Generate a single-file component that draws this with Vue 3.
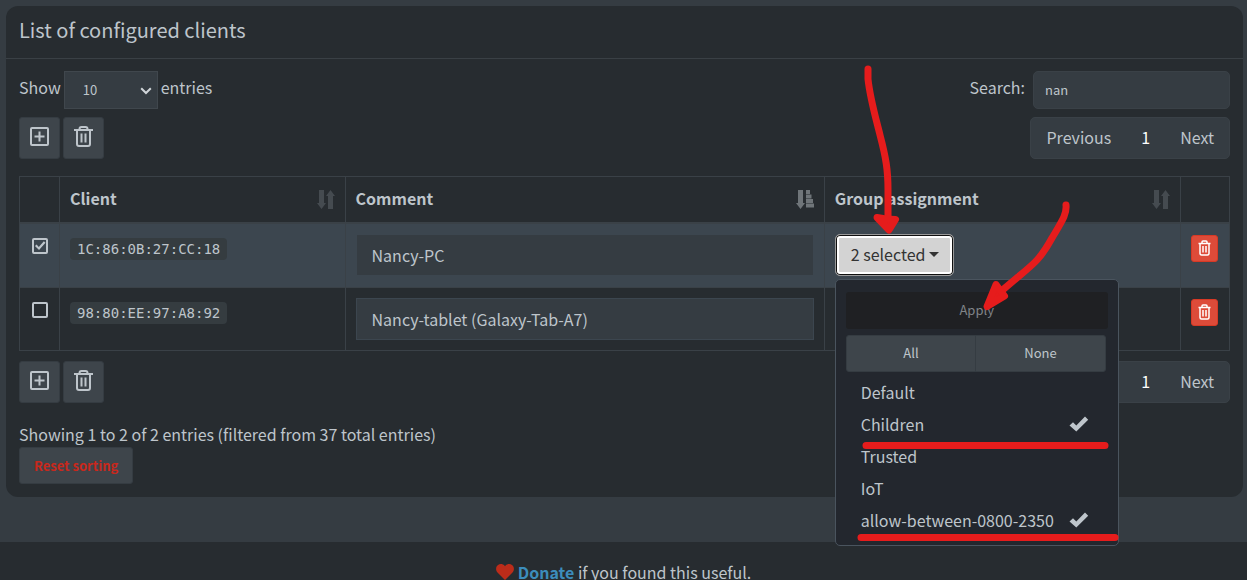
<script setup>
import { ref } from 'vue'

const pageLength = ref('10')
const search = ref('nan')

const columns = [
  { title: 'Client', sort: 'both' },
  { title: 'Comment', sort: 'asc' },
  { title: 'Group assignment', sort: 'both' },
]

const clients = ref([
  { mac: '1C:86:0B:27:CC:18', comment: 'Nancy-PC', selected: true, open: true },
  { mac: '98:80:EE:97:A8:92', comment: 'Nancy-tablet (Galaxy-Tab-A7)', selected: false, open: false },
])

const groups = ref([
  { name: 'Default', on: false },
  { name: 'Children', on: true },
  { name: 'Trusted', on: false },
  { name: 'IoT', on: false },
  { name: 'allow-between-0800-2350', on: true },
])
</script>

<template>
  <div class="page">
    <main class="content">
      <section class="card">
        <header class="card-header">
          <h3>List of configured clients</h3>
        </header>
        <div class="card-body">
          <div class="bar">
            <div class="field">
              <label for="length">Show</label>
              <span class="select-wrap">
                <select id="length" v-model="pageLength">
                  <option>10</option>
                  <option>25</option>
                  <option>50</option>
                </select>
                <svg class="chevron" viewBox="0 0 12 8" width="12" height="8"><path d="M1.2 1.2 6 6l4.800-4.800" /></svg>
              </span>
              <span>entries</span>
            </div>
            <div class="field search">
              <label for="search">Search:</label>
              <input id="search" v-model="search" type="text" />
            </div>
          </div>

          <div class="bar tools">
            <div class="buttons">
              <button type="button" class="tool" aria-label="Select all">
                <svg viewBox="0 0 19 22" width="19" height="22"><rect x="1" y="2" width="17" height="17" rx="1" /><path d="M9.500 5.500v10M4.500 10.500h10" /></svg>
              </button>
              <button type="button" class="tool" aria-label="Delete selected">
                <svg viewBox="0 0 19 22" width="19" height="22"><path d="M0 4h19M5.500 4V3q0-2 2-2h4q2 0 2 2v1M3 5v13q0 2 2 2h9q2 0 2-2V5M7.500 7.500v9M11.500 7.500v9" /></svg>
              </button>
            </div>
            <nav class="pager" aria-label="Pages">
              <a href="#prev">Previous</a><a href="#1" class="current">1</a><a href="#next">Next</a>
            </nav>
          </div>

          <table>
            <colgroup>
              <col class="c-check" /><col class="c-client" /><col class="c-comment" /><col /><col class="c-action" />
            </colgroup>
            <thead>
              <tr>
                <th></th>
                <th v-for="col in columns" :key="col.title">
                  <div class="head">
                    <span>{{ col.title }}</span>
                    <svg v-if="col.sort === 'both'" class="sort" viewBox="0 0 18 19" width="18" height="19">
                      <path d="M2 0h5v13h2l-4.500 6L0 13h2zM11 19h5V6h2l-4.500-6L9 6h2z" />
                    </svg>
                    <svg v-else class="sort active" viewBox="0 0 18 19" width="18" height="19">
                      <path d="M2 0h5v13h2l-4.500 6L0 13h2zM10 0h4v4h-4zM10 4.500h5.500v4H10zM10 9h7v4h-7zM10 13.500h8v4h-8z" />
                    </svg>
                  </div>
                </th>
                <th></th>
              </tr>
            </thead>
            <tbody>
              <tr v-for="(client, i) in clients" :key="client.mac" :class="{ selected: client.selected }">
                <td class="check-cell">
                  <input v-model="client.selected" type="checkbox" :aria-label="'Select ' + client.mac" />
                </td>
                <td><code>{{ client.mac }}</code></td>
                <td>
                  <input v-model="client.comment" class="comment" type="text" :aria-label="'Comment ' + (i + 1)" />
                </td>
                <td>
                  <div v-if="client.open" class="dropdown">
                    <button type="button" class="toggle">2 selected<span class="caret"></span></button>
                    <div class="menu">
                      <button type="button" class="apply" disabled>Apply</button>
                      <div class="all-none">
                        <button type="button">All</button>
                        <button type="button">None</button>
                      </div>
                      <ul>
                        <li v-for="g in groups" :key="g.name">
                          <a href="#group" @click.prevent="g.on = !g.on">
                            {{ g.name }}
                            <svg v-if="g.on" viewBox="0 0 20 16" width="20" height="16"><path d="M.5 9.500 4 6.200l3.300 3.200L16 .5l3.200 3.200L7.300 15.500z" /></svg>
                          </a>
                        </li>
                      </ul>
                    </div>
                  </div>
                </td>
                <td>
                  <button type="button" class="delete" :aria-label="'Delete ' + client.mac">
                    <svg viewBox="0 0 13 16" width="13" height="16"><path d="M.5 3.500h12M4 3V2q0-1 1-1h3q1 0 1 1v1M2 4v9.500q0 1.500 1.500 1.500h6q1.500 0 1.500-1.500V4M5 6v6.500M8 6v6.500" /></svg>
                  </button>
                </td>
              </tr>
            </tbody>
          </table>

          <div class="bar below">
            <div class="buttons">
              <button type="button" class="tool" aria-label="Select all">
                <svg viewBox="0 0 19 22" width="19" height="22"><rect x="1" y="2" width="17" height="17" rx="1" /><path d="M9.500 5.500v10M4.500 10.500h10" /></svg>
              </button>
              <button type="button" class="tool" aria-label="Delete selected">
                <svg viewBox="0 0 19 22" width="19" height="22"><path d="M0 4h19M5.500 4V3q0-2 2-2h4q2 0 2 2v1M3 5v13q0 2 2 2h9q2 0 2-2V5M7.500 7.500v9M11.500 7.500v9" /></svg>
              </button>
            </div>
            <nav class="pager" aria-label="Pages below">
              <a href="#prev">Previous</a><a href="#1" class="current">1</a><a href="#next">Next</a>
            </nav>
          </div>

          <p class="info">Showing 1 to 2 of 2 entries (filtered from 37 total entries)</p>
          <button type="button" class="reset">Reset sorting</button>
        </div>
      </section>
    </main>

    <footer>
      <svg viewBox="0 0 18 16" width="18" height="16"><path d="M9 16 1.500 8.500C-.5 6.300-.3 3 1.700 1.300 3.800-.5 6.700-.2 8.400 1.600L9 2.300l.6-.7c1.700-1.800 4.600-2.100 6.700-.3 2 1.700 2.200 5 .2 7.200z" /></svg>
      <span><a href="#donate">Donate</a> if you found this useful.</span>
    </footer>

    <svg class="marks" viewBox="0 0 1247 580" width="1247" height="580" aria-hidden="true">
      <path d="M868 69v10C870 98 875 115 880 135C886 158 888 170 888 190V226" />
      <path class="solid" d="M877 217.500 889 230 895.500 219.500 886 219z" />
      <path d="M1066 205C1067 214 1062 221 1052 238C1041 258 1035 263 1018 277L999 293" />
      <path class="solid" d="M996 284.500 1004.500 296 987 306.500z" />
      <path d="M866 445.500h239M861 537.500h254" />
    </svg>
  </div>
</template>

<style>
html {
  background: #353c42;
  scrollbar-width: none;
}
body {
  margin: 0;
}
</style>

<style scoped>
* {
  box-sizing: border-box;
}
.page {
  position: relative;
  min-height: 100vh;
  background: #353c42;
  color: #bec5cb;
  font-family: "Noto Sans CJK SC", "Noto Sans", sans-serif;
  font-size: 16px;
  line-height: 26px;
}
button,
input,
select {
  margin: 0;
  font-family: inherit;
  color: inherit;
}
a {
  color: inherit;
  text-decoration: none;
}
svg {
  display: block;
  fill: none;
}
.content {
  padding: 6px 4px 45px 6px;
}
.card {
  background: #272c30;
  border-radius: 12px;
}
.card-header {
  padding: 10px 13px 14px;
  border-bottom: 1px solid #3a4045;
}
h3 {
  margin: 0;
  font-size: 20px;
  font-weight: 400;
  line-height: 28px;
}
.card-body {
  padding: 12px 13px 13px;
}
.bar {
  display: flex;
  justify-content: space-between;
}
.tools {
  margin: 8px 0 17px;
}
.below {
  margin-top: 10px;
}
.field {
  display: flex;
  align-items: flex-start;
  gap: 3px;
}
.field label,
.field > span {
  line-height: 32px;
}
.field.search {
  gap: 8px;
}
.select-wrap {
  position: relative;
}
select {
  display: block;
  appearance: none;
  width: 94px;
  height: 38px;
  padding: 0 18px 2px;
  font-size: 13px;
  background: #353c42;
  border: 1px solid #40474d;
  border-radius: 0;
}
.chevron {
  position: absolute;
  right: 6px;
  top: 16px;
  stroke: #d0d5d9;
  stroke-width: 2;
}
#search {
  width: 197px;
  height: 38px;
  padding: 0 11px 2px;
  font-size: 13px;
  background: #353c42;
  border: 1px solid #3a4147;
  border-radius: 5px;
}
.buttons {
  display: flex;
  gap: 3px;
}
.tool {
  display: flex;
  justify-content: center;
  width: 41px;
  height: 42px;
  padding: 8px 0 0;
  background: #3e454b;
  border: 1px solid #353c42;
  border-radius: 3px;
}
.tool svg {
  stroke: #bec5cb;
  stroke-width: 2;
}
.pager {
  display: flex;
  height: 42px;
  background: #353c42;
  border: 1px solid #3a4147;
  border-radius: 5px;
}
.pager a {
  padding: 6px 15px;
}
.pager .current {
  color: #fff;
}
table {
  width: 100%;
  table-layout: fixed;
  border-collapse: collapse;
}
.c-check {
  width: 40px;
}
.c-client {
  width: 23.6%;
}
.c-comment {
  width: 39.6%;
}
.c-action {
  width: 49px;
}
th,
td {
  padding: 10px;
  border: 1px solid #3a4147;
  text-align: left;
  vertical-align: top;
}
th {
  border-bottom-width: 2px;
  font-weight: 700;
}
.head {
  display: flex;
  align-items: center;
  justify-content: space-between;
  height: 25px;
}
.head span {
  padding-bottom: 4px;
}
.sort {
  fill: #454b50;
}
.sort.active {
  fill: #6f7579;
}
td {
  height: 63px;
}
tr.selected td {
  height: 64px;
}
.selected {
  background: #3c464f;
}
td.check-cell {
  padding: 14px 12px;
}
input[type="checkbox"] {
  display: block;
  appearance: none;
  width: 16px;
  height: 16px;
  border: 2px solid #bec5cb;
  border-radius: 2px;
}
input[type="checkbox"]:checked::before {
  content: "";
  display: block;
  width: 12px;
  height: 12px;
  background: #bec5cb;
  clip-path: polygon(8% 50%, 22% 38%, 40% 58%, 82% 10%, 96% 22%, 42% 84%);
}
code {
  display: inline-block;
  padding: 0 7px;
  font-family: "DejaVu Sans Mono", monospace;
  font-size: 14px;
  line-height: 22px;
  background: #353c40;
  border-radius: 4px;
}
td code {
  margin-top: 1px;
}
.comment {
  display: block;
  width: 100%;
  height: 42px;
  padding: 0 15px;
  font-size: 16px;
  background: #353c42;
  border: 1px solid #3c464f;
  border-radius: 0;
}
.dropdown {
  position: relative;
}
.toggle {
  display: flex;
  align-items: center;
  gap: 3px;
  height: 42px;
  padding: 0 14px 2px 15px;
  font-size: 16px;
  color: #333;
  background: #d3d3d3;
  border: 1px solid #999;
  border-radius: 5px;
  box-shadow: inset 0 0 0 1px #101010, inset 0 0 0 3px #fff;
}
.caret {
  border: 5px solid transparent;
  border-top-color: #333;
  border-bottom: 0;
}
.menu {
  position: absolute;
  z-index: 2;
  top: 45px;
  left: 0;
  width: 284px;
  padding: 12px 10px 9px;
  background: #23272e;
  border: 1px solid #4a545e;
  border-radius: 5px;
}
.menu button {
  height: 37px;
  font-size: 13px;
}
.apply {
  display: block;
  width: 100%;
  padding: 0 0 2px;
  color: #808488;
  background: #1f2023;
  border: 0;
  border-radius: 3px;
}
.all-none {
  display: flex;
  margin: 6px 2px 4px 0;
}
.all-none button {
  flex: 1;
  padding: 0 0 2px;
  background: #3e454b;
  border: 1px solid #353c42;
  border-radius: 3px 0 0 3px;
}
.all-none button + button {
  margin-left: -1px;
  border-radius: 0 3px 3px 0;
}
ul {
  margin: 0;
  padding: 0;
  list-style: none;
}
li a {
  display: flex;
  align-items: center;
  justify-content: space-between;
  height: 32px;
  padding: 0 19px 0 15px;
}
li svg {
  fill: #bec5cb;
}
.delete {
  display: flex;
  justify-content: center;
  width: 27px;
  height: 27px;
  margin-top: 1px;
  padding: 4px 0 0;
  background: #dd4b39;
  border: 1px solid #d73925;
  border-radius: 3px;
}
.delete svg {
  stroke: #fff;
  stroke-width: 1.500;
}
.info {
  margin: 18px 0 0;
}
.reset {
  display: block;
  height: 37px;
  padding: 0 14px;
  font-size: 13px;
  font-weight: 700;
  color: #c9281c;
  background: #3e454b;
  border: 1px solid #353c42;
  border-radius: 3px;
}
footer {
  display: flex;
  justify-content: center;
  gap: 4px;
  padding: 17px 0;
  background: #272c30;
}
footer svg {
  margin-top: 5px;
  fill: #bc2c1a;
}
footer a {
  font-weight: 700;
  color: #3c8dbc;
}
.marks {
  position: absolute;
  z-index: 3;
  top: 0;
  left: 0;
  pointer-events: none;
  stroke: #e61c1c;
  stroke-width: 7;
  stroke-linecap: round;
  stroke-linejoin: round;
}
.marks .solid {
  fill: #e61c1c;
}
</style>
